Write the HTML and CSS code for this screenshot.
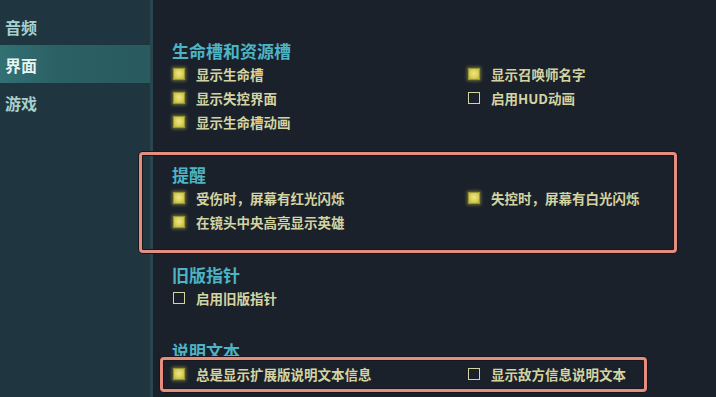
FILE: index.html
```html
<!DOCTYPE html>
<html lang="zh-CN">
<head>
<meta charset="utf-8">
<title>设置</title>
<link rel="stylesheet" href="styles.css">
</head>
<body>
<div class="app">
  <nav class="sidebar">
    <div class="nav-item">音频</div>
    <div class="nav-item active">界面</div>
    <div class="nav-item">游戏</div>
  </nav>
  <div class="divider"></div>
  <main class="main">
    <section class="section">
      <h2 class="title">生命槽和资源槽</h2>
      <div class="opts">
        <div class="opt"><span class="cb on"></span>显示生命槽</div>
        <div class="opt"><span class="cb on"></span>显示召唤师名字</div>
        <div class="opt"><span class="cb on"></span>显示失控界面</div>
        <div class="opt"><span class="cb"></span>启用HUD动画</div>
        <div class="opt"><span class="cb on"></span>显示生命槽动画</div>
      </div>
    </section>
    <section class="section">
      <h2 class="title">提醒</h2>
      <div class="opts">
        <div class="opt"><span class="cb on"></span>受伤时，屏幕有红光闪烁</div>
        <div class="opt"><span class="cb on"></span>失控时，屏幕有白光闪烁</div>
        <div class="opt"><span class="cb on"></span>在镜头中央高亮显示英雄</div>
      </div>
    </section>
    <section class="section">
      <h2 class="title">旧版指针</h2>
      <div class="opts">
        <div class="opt"><span class="cb"></span>启用旧版指针</div>
      </div>
    </section>
    <section class="section">
      <h2 class="title">说明文本</h2>
      <div class="opts">
        <div class="opt"><span class="cb on"></span>总是显示扩展版说明文本信息</div>
        <div class="opt"><span class="cb"></span>显示敌方信息说明文本</div>
      </div>
    </section>
  </main>
</div>
<div class="mark mark-1"></div>
<div class="mark mark-2"></div>
</body>
</html>
```
FILE: styles.css
```css
* { box-sizing: border-box; }
html, body {
  margin: 0;
  padding: 0;
  width: 716px;
  height: 397px;
  overflow: hidden;
  background: #1b212b;
  font-family: "Noto Sans CJK SC", "Noto Sans", sans-serif;
}
.app {
  display: flex;
  height: 397px;
}
.sidebar {
  width: 150px;
  background: #1f3540;
  padding-top: 7px;
  display: flex;
  flex-direction: column;
}
.nav-item {
  height: 38px;
  line-height: 40px;
  padding-left: 5px;
  font-size: 16px;
  font-weight: 700;
  color: #a6d0cf;
}
.nav-item.active {
  color: #e6f4f2;
  background: linear-gradient(90deg, #327074 0%, #2b6064 40%, #285a5e 100%);
}
.divider {
  width: 3px;
  background: #284650;
}
.main {
  flex: 1;
  padding: 40px 0 0 19px;
}
.section + .section { margin-top: 30px; }
.title {
  margin: 0;
  height: 22px;
  line-height: 22px;
  font-size: 17px;
  font-weight: 700;
  color: #4cb4c4;
}
.opts {
  display: grid;
  grid-template-columns: 295px 1fr;
  grid-auto-rows: 24px;
}
.opt {
  display: flex;
  align-items: center;
  font-size: 13.5px;
  font-weight: 700;
  color: #d3d4a2;
  white-space: nowrap;
}
.cb {
  width: 12px;
  height: 12px;
  margin: 0 11px 0 1px;
  border: 1.5px solid #d3d4a2;
  flex: none;
}
.cb.on {
  border: 1px solid #9a9636;
  background: radial-gradient(circle at 50% 45%, #efe88a 0%, #d8d056 55%, #b8b03a 100%);
  box-shadow: 0 0 3px 1px rgba(214, 208, 70, 0.45);
}
.mark {
  position: absolute;
  border: 3px solid #e58e80;
  border-radius: 4px;
  box-shadow: 0 0 0 1px #16181c, inset 0 0 0 1px #16181c;
}
.mark-1 { left: 139px; top: 152px; width: 538px; height: 101px; }
.mark-2 { left: 160px; top: 357px; width: 487px; height: 35px; }
```
